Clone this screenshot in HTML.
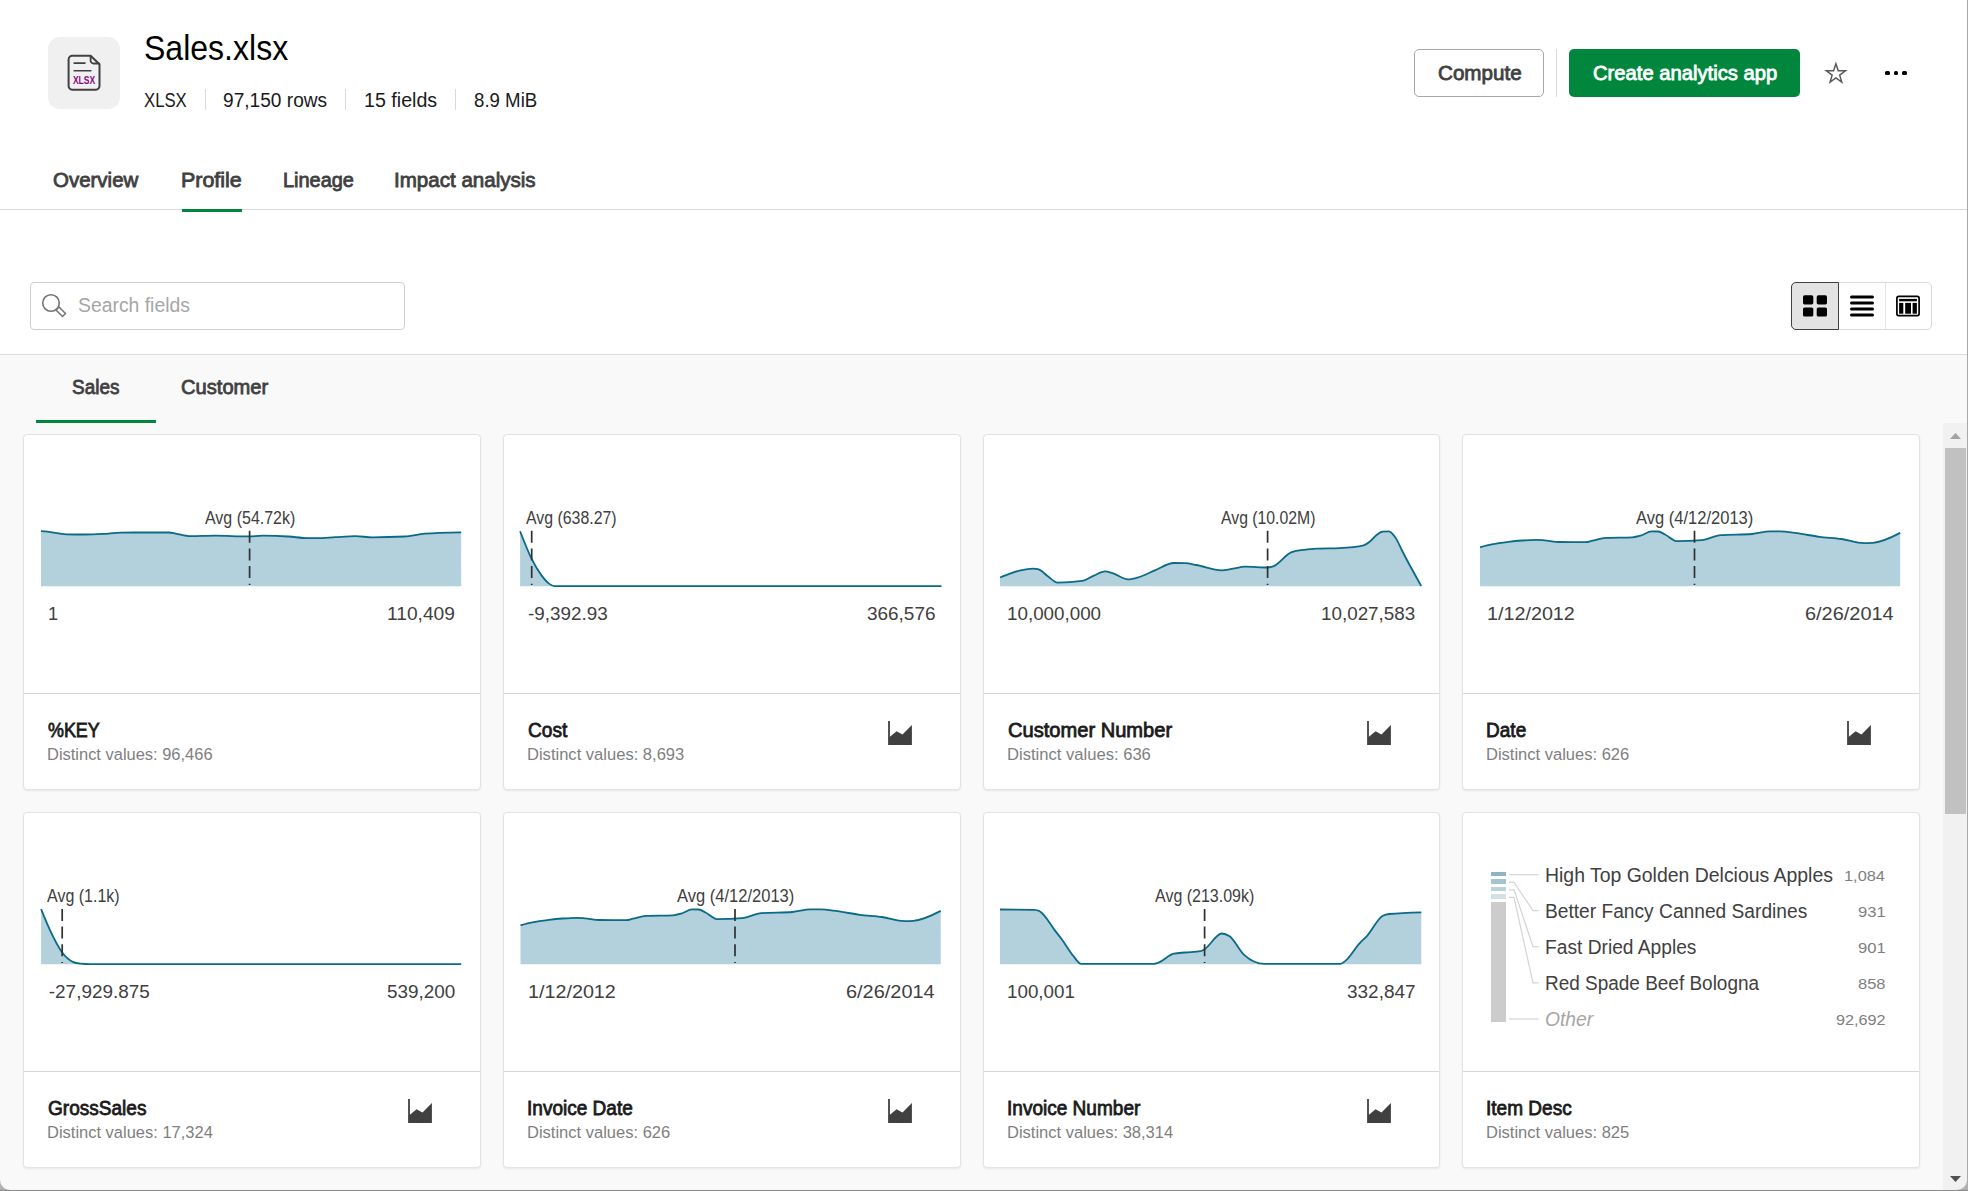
<!DOCTYPE html>
<html><head><meta charset="utf-8"><title>Sales.xlsx</title>
<style>
html,body{margin:0;padding:0;}
body{width:1968px;height:1191px;overflow:hidden;position:relative;background:#fff;font-family:"Liberation Sans",sans-serif;}
.abs{position:absolute;}
.t{position:absolute;white-space:nowrap;}
.card{position:absolute;background:#fff;border:1px solid #e3e3e3;border-radius:4px;box-shadow:0 1px 2px rgba(0,0,0,0.08);}
</style></head><body>
<div class="abs" style="left:48px;top:37px;width:72px;height:72px;border-radius:12px;background:#f0f0f0"></div>
<svg class="abs" style="left:48px;top:37px" width="72" height="72" viewBox="0 0 72 72">
<path d="M20.6 22.4 a3.6 3.6 0 0 1 3.6 -3.6 H42.6 L51.5 27.2 V49.1 a3.6 3.6 0 0 1 -3.6 3.6 H24.2 a3.6 3.6 0 0 1 -3.6 -3.6 Z" fill="none" stroke="#404040" stroke-width="2" stroke-linejoin="round"/>
<path d="M42.6 18.8 V23.6 a2.9 2.9 0 0 0 2.9 2.9 H51.5" fill="none" stroke="#404040" stroke-width="1.8" stroke-linejoin="round"/>
<path d="M26.1 26.1 H37.0 M26.1 33.7 H42.9" stroke="#404040" stroke-width="1.6" stroke-linecap="round"/>
<text x="24.9" y="46.9" font-family="Liberation Sans" font-weight="700" font-size="10.4" textLength="22.3" lengthAdjust="spacingAndGlyphs" fill="#8a0c80">XLSX</text>
</svg>
<div class="t" style="left:144.09px;top:31px;font-size:34.59px;line-height:34.59px;color:#000;transform:scaleX(0.9262);transform-origin:0 0;">Sales.xlsx</div>
<div class="t" style="left:143.87px;top:91px;font-size:19.62px;line-height:19.62px;color:#1a1a1a;transform:scaleX(0.8528);transform-origin:0 0;">XLSX</div>
<div class="t" style="left:223.15px;top:91px;font-size:19.62px;line-height:19.62px;color:#1a1a1a;transform:scaleX(0.9746);transform-origin:0 0;">97,150 rows</div>
<div class="t" style="left:364.30px;top:91px;font-size:19.62px;line-height:19.62px;color:#1a1a1a;transform:scaleX(1.0018);transform-origin:0 0;">15 fields</div>
<div class="t" style="left:473.97px;top:91px;font-size:19.62px;line-height:19.62px;color:#1a1a1a;transform:scaleX(0.9516);transform-origin:0 0;">8.9 MiB</div>
<div class="abs" style="left:205px;top:89px;width:1px;height:21px;background:#d9d9d9"></div>
<div class="abs" style="left:345px;top:89px;width:1px;height:21px;background:#d9d9d9"></div>
<div class="abs" style="left:455px;top:89px;width:1px;height:21px;background:#d9d9d9"></div>
<div class="abs" style="left:1414px;top:49px;width:128px;height:46px;border:1px solid #a8a8a8;border-radius:5px;background:#fff"></div>
<div class="t" style="left:1437.59px;top:63px;font-size:20.35px;line-height:20.35px;color:#404040;-webkit-text-stroke:0.8px #404040;transform:scaleX(1.0130);transform-origin:0 0;">Compute</div>
<div class="abs" style="left:1556px;top:49px;width:1px;height:48px;background:#d9d9d9"></div>
<div class="abs" style="left:1569px;top:49px;width:231px;height:48px;border-radius:5px;background:#00873d"></div>
<div class="t" style="left:1592.89px;top:63px;font-size:20.06px;line-height:20.06px;color:#fff;-webkit-text-stroke:0.8px #fff;transform:scaleX(1.0078);transform-origin:0 0;">Create analytics app</div>
<svg class="abs" style="left:1824px;top:61px" width="24" height="24" viewBox="0 0 24 24">
<path d="M11.90 2.85 L14.24 9.69 L21.44 9.78 L15.68 14.10 L17.75 21.03 L11.90 16.89 L6.05 21.03 L8.12 14.10 L2.36 9.78 L9.56 9.69 Z" fill="none" stroke="#595959" stroke-width="1.5" stroke-linejoin="miter"/>
</svg>
<div class="abs" style="left:1885.1px;top:70.5px;width:4.8px;height:4.8px;border-radius:1.6px;background:#000"></div>
<div class="abs" style="left:1893.6px;top:70.5px;width:4.8px;height:4.8px;border-radius:1.6px;background:#000"></div>
<div class="abs" style="left:1902.1px;top:70.5px;width:4.8px;height:4.8px;border-radius:1.6px;background:#000"></div>
<div class="t" style="left:53.49px;top:170px;font-size:20.35px;line-height:20.35px;color:#404040;-webkit-text-stroke:0.8px #404040;transform:scaleX(1.0060);transform-origin:0 0;">Overview</div>
<div class="t" style="left:180.99px;top:170px;font-size:20.35px;line-height:20.35px;color:#404040;-webkit-text-stroke:0.8px #404040;transform:scaleX(1.0540);transform-origin:0 0;">Profile</div>
<div class="t" style="left:282.81px;top:170px;font-size:20.35px;line-height:20.35px;color:#404040;-webkit-text-stroke:0.8px #404040;transform:scaleX(0.9800);transform-origin:0 0;">Lineage</div>
<div class="t" style="left:394.21px;top:170px;font-size:20.35px;line-height:20.35px;color:#404040;-webkit-text-stroke:0.8px #404040;transform:scaleX(1.0103);transform-origin:0 0;">Impact analysis</div>
<div class="abs" style="left:0;top:209px;width:1967px;height:1px;background:#d9d9d9"></div>
<div class="abs" style="left:182px;top:209px;width:60px;height:3px;background:#00873d"></div>
<div class="abs" style="left:30px;top:282px;width:373px;height:46px;border:1px solid #cfcfcf;border-radius:4px;background:#fff"></div>
<svg class="abs" style="left:40px;top:292px" width="28" height="28" viewBox="0 0 28 28">
<circle cx="11" cy="11" r="8.3" fill="none" stroke="#737373" stroke-width="1.6"/>
<path d="M16.0 18.0 L19.0 15.0 L25.5 21.5 L22.5 24.5 Z" fill="none" stroke="#737373" stroke-width="1.5" stroke-linejoin="round"/>
</svg>
<div class="t" style="left:78.15px;top:296px;font-size:19.91px;line-height:19.91px;color:#a6a6a6;transform:scaleX(0.9729);transform-origin:0 0;">Search fields</div>
<div class="abs" style="left:1791px;top:282px;width:139px;height:46px;border:1px solid #d9d9d9;border-radius:5px;background:#fff"></div>
<div class="abs" style="left:1885px;top:283px;width:1px;height:46px;background:#e6e6e6"></div>
<div class="abs" style="left:1791px;top:282px;width:46px;height:46px;border:1px solid #404040;border-radius:5px 0 0 5px;background:#e3e3e3"></div>
<svg class="abs" style="left:1790px;top:282px" width="140" height="48" viewBox="1790 282 140 48">
<rect x="1803" y="295.3" width="10.3" height="9.1" rx="1.6" fill="#000"/>
<rect x="1816.7" y="295.3" width="10.3" height="9.1" rx="1.6" fill="#000"/>
<rect x="1803" y="307.4" width="10.3" height="9.1" rx="1.6" fill="#000"/>
<rect x="1816.7" y="307.4" width="10.3" height="9.1" rx="1.6" fill="#000"/>
<path d="M1851.5 297 H1872.5 M1851.5 302.9 H1872.5 M1851.5 308.9 H1872.5 M1851.5 314.9 H1872.5" stroke="#000" stroke-width="3" stroke-linecap="round"/>
<rect x="1896.9" y="296.4" width="22.2" height="19.2" rx="1.8" fill="none" stroke="#000" stroke-width="1.7"/>
<rect x="1899.1" y="298.9" width="17.8" height="2.4" fill="#000"/>
<rect x="1899.1" y="302.9" width="4.2" height="10.8" fill="#000"/>
<rect x="1905.2" y="302.9" width="5.8" height="10.8" fill="#000"/>
<rect x="1912.6" y="302.9" width="4.3" height="10.8" fill="#000"/>
</svg>
<div class="abs" style="left:0;top:354px;width:1967px;height:1px;background:#d9d9d9"></div>
<div class="abs" style="left:0;top:355px;width:1967px;height:836px;background:#f9f9f9"></div>
<div class="t" style="left:72.47px;top:377px;font-size:20.35px;line-height:20.35px;color:#404040;-webkit-text-stroke:0.8px #404040;transform:scaleX(0.9320);transform-origin:0 0;">Sales</div>
<div class="t" style="left:181.41px;top:377px;font-size:20.35px;line-height:20.35px;color:#404040;-webkit-text-stroke:0.8px #404040;transform:scaleX(0.9897);transform-origin:0 0;">Customer</div>
<div class="abs" style="left:36px;top:420px;width:120px;height:3px;background:#00873d"></div>
<div class="card" style="left:23px;top:434px;width:456px;height:354px"></div>
<div class="abs" style="left:24px;top:692.5px;width:456px;height:1.5px;background:#d6d6d6"></div>
<div class="t" style="left:47.94px;top:720px;font-size:20.35px;line-height:20.35px;color:#1a1a1a;-webkit-text-stroke:0.8px #1a1a1a;transform:scaleX(0.8798);transform-origin:0 0;">%KEY</div>
<div class="t" style="left:47.46px;top:747px;font-size:16.86px;line-height:16.86px;color:#808080;transform:scaleX(0.9760);transform-origin:0 0;">Distinct values: 96,466</div>
<div class="card" style="left:503px;top:434px;width:456px;height:354px"></div>
<div class="abs" style="left:504px;top:692.5px;width:456px;height:1.5px;background:#d6d6d6"></div>
<div class="t" style="left:527.66px;top:720px;font-size:20.35px;line-height:20.35px;color:#1a1a1a;-webkit-text-stroke:0.8px #1a1a1a;transform:scaleX(0.9399);transform-origin:0 0;">Cost</div>
<div class="t" style="left:527.45px;top:747px;font-size:16.86px;line-height:16.86px;color:#808080;transform:scaleX(0.9814);transform-origin:0 0;">Distinct values: 8,693</div>
<svg class="abs" style="left:888px;top:721px" width="24" height="24" viewBox="0 0 24 24"><path d="M0.1 0 H1.9 V15.8 L8.6 10.2 L14.5 13.4 L23.9 4 V24 H0.1 Z" fill="#404040"/></svg>
<div class="card" style="left:983px;top:434px;width:455px;height:354px"></div>
<div class="abs" style="left:984px;top:692.5px;width:455px;height:1.5px;background:#d6d6d6"></div>
<div class="t" style="left:1007.61px;top:720px;font-size:20.35px;line-height:20.35px;color:#1a1a1a;-webkit-text-stroke:0.8px #1a1a1a;transform:scaleX(0.9877);transform-origin:0 0;">Customer Number</div>
<div class="t" style="left:1007.45px;top:747px;font-size:16.86px;line-height:16.86px;color:#808080;transform:scaleX(0.9839);transform-origin:0 0;">Distinct values: 636</div>
<svg class="abs" style="left:1367px;top:721px" width="24" height="24" viewBox="0 0 24 24"><path d="M0.1 0 H1.9 V15.8 L8.6 10.2 L14.5 13.4 L23.9 4 V24 H0.1 Z" fill="#404040"/></svg>
<div class="card" style="left:1462px;top:434px;width:456px;height:354px"></div>
<div class="abs" style="left:1463px;top:692.5px;width:456px;height:1.5px;background:#d6d6d6"></div>
<div class="t" style="left:1486.08px;top:720px;font-size:20.35px;line-height:20.35px;color:#1a1a1a;-webkit-text-stroke:0.8px #1a1a1a;transform:scaleX(0.9359);transform-origin:0 0;">Date</div>
<div class="t" style="left:1486.45px;top:747px;font-size:16.86px;line-height:16.86px;color:#808080;transform:scaleX(0.9797);transform-origin:0 0;">Distinct values: 626</div>
<svg class="abs" style="left:1847px;top:721px" width="24" height="24" viewBox="0 0 24 24"><path d="M0.1 0 H1.9 V15.8 L8.6 10.2 L14.5 13.4 L23.9 4 V24 H0.1 Z" fill="#404040"/></svg>
<div class="card" style="left:23px;top:812px;width:456px;height:354px"></div>
<div class="abs" style="left:24px;top:1070.5px;width:456px;height:1.5px;background:#d6d6d6"></div>
<div class="t" style="left:47.66px;top:1098px;font-size:20.35px;line-height:20.35px;color:#1a1a1a;-webkit-text-stroke:0.8px #1a1a1a;transform:scaleX(0.9361);transform-origin:0 0;">GrossSales</div>
<div class="t" style="left:47.46px;top:1125px;font-size:16.86px;line-height:16.86px;color:#808080;transform:scaleX(0.9775);transform-origin:0 0;">Distinct values: 17,324</div>
<svg class="abs" style="left:408px;top:1099px" width="24" height="24" viewBox="0 0 24 24"><path d="M0.1 0 H1.9 V15.8 L8.6 10.2 L14.5 13.4 L23.9 4 V24 H0.1 Z" fill="#404040"/></svg>
<div class="card" style="left:503px;top:812px;width:456px;height:354px"></div>
<div class="abs" style="left:504px;top:1070.5px;width:456px;height:1.5px;background:#d6d6d6"></div>
<div class="t" style="left:526.85px;top:1098px;font-size:20.35px;line-height:20.35px;color:#1a1a1a;-webkit-text-stroke:0.8px #1a1a1a;transform:scaleX(0.9359);transform-origin:0 0;">Invoice Date</div>
<div class="t" style="left:527.45px;top:1125px;font-size:16.86px;line-height:16.86px;color:#808080;transform:scaleX(0.9797);transform-origin:0 0;">Distinct values: 626</div>
<svg class="abs" style="left:888px;top:1099px" width="24" height="24" viewBox="0 0 24 24"><path d="M0.1 0 H1.9 V15.8 L8.6 10.2 L14.5 13.4 L23.9 4 V24 H0.1 Z" fill="#404040"/></svg>
<div class="card" style="left:983px;top:812px;width:455px;height:354px"></div>
<div class="abs" style="left:984px;top:1070.5px;width:455px;height:1.5px;background:#d6d6d6"></div>
<div class="t" style="left:1006.85px;top:1098px;font-size:20.35px;line-height:20.35px;color:#1a1a1a;-webkit-text-stroke:0.8px #1a1a1a;transform:scaleX(0.9359);transform-origin:0 0;">Invoice Number</div>
<div class="t" style="left:1007.45px;top:1125px;font-size:16.86px;line-height:16.86px;color:#808080;transform:scaleX(0.9797);transform-origin:0 0;">Distinct values: 38,314</div>
<svg class="abs" style="left:1367px;top:1099px" width="24" height="24" viewBox="0 0 24 24"><path d="M0.1 0 H1.9 V15.8 L8.6 10.2 L14.5 13.4 L23.9 4 V24 H0.1 Z" fill="#404040"/></svg>
<div class="card" style="left:1462px;top:812px;width:456px;height:354px"></div>
<div class="abs" style="left:1463px;top:1070.5px;width:456px;height:1.5px;background:#d6d6d6"></div>
<div class="t" style="left:1485.85px;top:1098px;font-size:20.35px;line-height:20.35px;color:#1a1a1a;-webkit-text-stroke:0.8px #1a1a1a;transform:scaleX(0.9359);transform-origin:0 0;">Item Desc</div>
<div class="t" style="left:1486.45px;top:1125px;font-size:16.86px;line-height:16.86px;color:#808080;transform:scaleX(0.9797);transform-origin:0 0;">Distinct values: 825</div>
<div class="t" style="left:204.75px;top:510px;font-size:17.44px;line-height:17.44px;color:#404040;transform:scaleX(0.9165);transform-origin:0 0;">Avg (54.72k)</div>
<div class="t" style="left:48.28px;top:605px;font-size:18.90px;line-height:18.90px;color:#404040;transform:scaleX(0.9576);transform-origin:0 0;">1</div>
<div class="t" style="left:387.40px;top:605px;font-size:18.90px;line-height:18.90px;color:#404040;transform:scaleX(1.0151);transform-origin:0 0;">110,409</div>
<div class="t" style="left:526.00px;top:510px;font-size:17.44px;line-height:17.44px;color:#404040;transform:scaleX(0.9104);transform-origin:0 0;">Avg (638.27)</div>
<div class="t" style="left:527.83px;top:605px;font-size:18.90px;line-height:18.90px;color:#404040;transform:scaleX(0.9974);transform-origin:0 0;">-9,392.93</div>
<div class="t" style="left:867.15px;top:605px;font-size:18.90px;line-height:18.90px;color:#404040;transform:scaleX(1.0026);transform-origin:0 0;">366,576</div>
<div class="t" style="left:1220.70px;top:510px;font-size:17.44px;line-height:17.44px;color:#404040;transform:scaleX(0.9052);transform-origin:0 0;">Avg (10.02M)</div>
<div class="t" style="left:1007.23px;top:605px;font-size:18.90px;line-height:18.90px;color:#404040;transform:scaleX(0.9949);transform-origin:0 0;">10,000,000</div>
<div class="t" style="left:1321.23px;top:605px;font-size:18.90px;line-height:18.90px;color:#404040;transform:scaleX(0.9962);transform-origin:0 0;">10,027,583</div>
<div class="t" style="left:1636.15px;top:510px;font-size:17.44px;line-height:17.44px;color:#404040;transform:scaleX(0.9478);transform-origin:0 0;">Avg (4/12/2013)</div>
<div class="t" style="left:1487.16px;top:605px;font-size:18.90px;line-height:18.90px;color:#404040;transform:scaleX(1.0450);transform-origin:0 0;">1/12/2012</div>
<div class="t" style="left:1805.35px;top:605px;font-size:18.90px;line-height:18.90px;color:#404040;transform:scaleX(1.0545);transform-origin:0 0;">6/26/2014</div>
<div class="t" style="left:47.10px;top:888px;font-size:17.44px;line-height:17.44px;color:#404040;transform:scaleX(0.9174);transform-origin:0 0;">Avg (1.1k)</div>
<div class="t" style="left:48.83px;top:983px;font-size:18.90px;line-height:18.90px;color:#404040;">-27,929.875</div>
<div class="t" style="left:386.95px;top:983px;font-size:18.90px;line-height:18.90px;color:#404040;">539,200</div>
<div class="t" style="left:676.65px;top:888px;font-size:17.44px;line-height:17.44px;color:#404040;transform:scaleX(0.9478);transform-origin:0 0;">Avg (4/12/2013)</div>
<div class="t" style="left:527.66px;top:983px;font-size:18.90px;line-height:18.90px;color:#404040;transform:scaleX(1.0450);transform-origin:0 0;">1/12/2012</div>
<div class="t" style="left:845.85px;top:983px;font-size:18.90px;line-height:18.90px;color:#404040;transform:scaleX(1.0545);transform-origin:0 0;">6/26/2014</div>
<div class="t" style="left:1155.30px;top:888px;font-size:17.44px;line-height:17.44px;color:#404040;transform:scaleX(0.9172);transform-origin:0 0;">Avg (213.09k)</div>
<div class="t" style="left:1007.23px;top:983px;font-size:18.90px;line-height:18.90px;color:#404040;transform:scaleX(0.9939);transform-origin:0 0;">100,001</div>
<div class="t" style="left:1346.95px;top:983px;font-size:18.90px;line-height:18.90px;color:#404040;transform:scaleX(1.0045);transform-origin:0 0;">332,847</div>
<div class="t" style="left:1544.95px;top:865px;font-size:20.35px;line-height:20.35px;color:#404040;transform:scaleX(0.9548);transform-origin:0 0;">High Top Golden Delcious Apples</div>
<div class="t" style="left:1844.27px;top:869px;font-size:14.97px;line-height:14.97px;color:#808080;transform:scaleX(1.0917);transform-origin:0 0;">1,084</div>
<div class="t" style="left:1544.97px;top:901px;font-size:20.35px;line-height:20.35px;color:#404040;transform:scaleX(0.9426);transform-origin:0 0;">Better Fancy Canned Sardines</div>
<div class="t" style="left:1857.87px;top:905px;font-size:14.97px;line-height:14.97px;color:#808080;transform:scaleX(1.1106);transform-origin:0 0;">931</div>
<div class="t" style="left:1544.97px;top:937px;font-size:20.35px;line-height:20.35px;color:#404040;transform:scaleX(0.9432);transform-origin:0 0;">Fast Dried Apples</div>
<div class="t" style="left:1857.87px;top:941px;font-size:14.97px;line-height:14.97px;color:#808080;transform:scaleX(1.1106);transform-origin:0 0;">901</div>
<div class="t" style="left:1544.99px;top:973px;font-size:20.35px;line-height:20.35px;color:#404040;transform:scaleX(0.9322);transform-origin:0 0;">Red Spade Beef Bologna</div>
<div class="t" style="left:1858.01px;top:977px;font-size:14.97px;line-height:14.97px;color:#808080;transform:scaleX(1.0989);transform-origin:0 0;">858</div>
<div class="t" style="left:1545.44px;top:1009px;font-size:20.35px;line-height:20.35px;color:#a6a6a6;font-style:italic;transform:scaleX(0.9465);transform-origin:0 0;">Other</div>
<div class="t" style="left:1835.89px;top:1013px;font-size:14.97px;line-height:14.97px;color:#808080;transform:scaleX(1.0839);transform-origin:0 0;">92,692</div>
<svg class="abs" style="left:0;top:0" width="1968" height="1191" viewBox="0 0 1968 1191">
<path d="M41.00 531.20 C43.07 531.35 45.13 531.50 47.20 531.70 C53.53 532.30 59.87 534.16 66.20 534.30 C72.17 534.43 78.13 534.50 84.10 534.50 C90.43 534.50 96.77 534.23 103.10 533.90 C109.07 533.59 115.03 532.64 121.00 532.60 C129.93 532.53 138.87 532.50 147.80 532.50 C154.87 532.50 161.93 532.50 169.00 532.50 C171.23 532.50 173.47 533.22 175.70 533.60 C180.57 534.42 185.43 536.20 190.30 536.20 C198.50 536.20 206.70 535.70 214.90 535.70 C226.07 535.70 237.23 536.40 248.40 536.40 C253.20 536.40 258.00 535.70 262.80 535.70 C271.37 535.70 279.93 535.97 288.50 536.50 C294.83 536.89 301.17 538.10 307.50 538.10 C310.83 538.10 314.17 538.10 317.50 538.10 C323.47 538.10 329.43 537.40 335.40 537.10 C342.13 536.76 348.87 536.20 355.60 536.20 C361.17 536.20 366.73 537.30 372.30 537.30 C383.10 537.30 393.90 537.03 404.70 536.50 C411.43 536.17 418.17 534.08 424.90 533.60 C437.00 532.73 449.10 532.52 461.20 532.30 L461.20 586.30 L41.00 586.30 Z" fill="#b3d1dc"/>
<path d="M41.00 531.20 C43.07 531.35 45.13 531.50 47.20 531.70 C53.53 532.30 59.87 534.16 66.20 534.30 C72.17 534.43 78.13 534.50 84.10 534.50 C90.43 534.50 96.77 534.23 103.10 533.90 C109.07 533.59 115.03 532.64 121.00 532.60 C129.93 532.53 138.87 532.50 147.80 532.50 C154.87 532.50 161.93 532.50 169.00 532.50 C171.23 532.50 173.47 533.22 175.70 533.60 C180.57 534.42 185.43 536.20 190.30 536.20 C198.50 536.20 206.70 535.70 214.90 535.70 C226.07 535.70 237.23 536.40 248.40 536.40 C253.20 536.40 258.00 535.70 262.80 535.70 C271.37 535.70 279.93 535.97 288.50 536.50 C294.83 536.89 301.17 538.10 307.50 538.10 C310.83 538.10 314.17 538.10 317.50 538.10 C323.47 538.10 329.43 537.40 335.40 537.10 C342.13 536.76 348.87 536.20 355.60 536.20 C361.17 536.20 366.73 537.30 372.30 537.30 C383.10 537.30 393.90 537.03 404.70 536.50 C411.43 536.17 418.17 534.08 424.90 533.60 C437.00 532.73 449.10 532.52 461.20 532.30" fill="none" stroke="#0b6a87" stroke-width="1.8" stroke-linejoin="round"/>
<line x1="249.6" y1="530.7" x2="249.6" y2="585.0" stroke="#303030" stroke-width="1.7" stroke-dasharray="12 5.7"/>
<path d="M520.10 531.30 C523.87 541.04 527.63 550.79 531.40 558.40 C534.77 565.20 538.13 570.87 541.50 575.40 C544.00 578.76 546.50 581.76 549.00 583.60 C550.70 584.85 552.40 586.10 554.10 586.10 C569.40 586.10 584.70 586.10 600.00 586.10 C713.83 586.10 827.67 586.10 941.50 586.10 L941.50 586.30 L520.10 586.30 Z" fill="#b3d1dc"/>
<path d="M520.10 531.30 C523.87 541.04 527.63 550.79 531.40 558.40 C534.77 565.20 538.13 570.87 541.50 575.40 C544.00 578.76 546.50 581.76 549.00 583.60 C550.70 584.85 552.40 586.10 554.10 586.10 C569.40 586.10 584.70 586.10 600.00 586.10 C713.83 586.10 827.67 586.10 941.50 586.10" fill="none" stroke="#0b6a87" stroke-width="1.8" stroke-linejoin="round"/>
<line x1="531.7" y1="530.7" x2="531.7" y2="585.0" stroke="#303030" stroke-width="1.7" stroke-dasharray="12 5.7"/>
<path d="M1000.00 577.50 C1003.57 576.01 1007.13 574.53 1010.70 573.30 C1014.03 572.15 1017.37 571.06 1020.70 570.30 C1024.80 569.37 1028.90 568.60 1033.00 568.60 C1034.67 568.60 1036.33 568.80 1038.00 569.20 C1041.17 569.96 1044.33 573.73 1047.50 575.90 C1050.87 578.21 1054.23 582.60 1057.60 582.60 C1065.80 582.60 1074.00 582.03 1082.20 580.90 C1085.93 580.38 1089.67 577.45 1093.40 575.90 C1097.30 574.28 1101.20 571.40 1105.10 571.40 C1107.53 571.40 1109.97 572.40 1112.40 573.10 C1117.60 574.59 1122.80 579.40 1128.00 579.40 C1131.73 579.40 1135.47 578.13 1139.20 577.00 C1144.43 575.42 1149.67 572.43 1154.90 570.30 C1161.23 567.72 1167.57 563.00 1173.90 563.00 C1177.63 563.00 1181.37 563.07 1185.10 563.20 C1188.80 563.33 1192.50 564.35 1196.20 565.00 C1204.73 566.50 1213.27 570.30 1221.80 570.30 C1225.53 570.30 1229.27 569.19 1233.00 568.60 C1237.07 567.96 1241.13 566.60 1245.20 566.60 C1252.67 566.60 1260.13 567.50 1267.60 567.50 C1269.47 567.50 1271.33 567.03 1273.20 566.40 C1279.17 564.40 1285.13 554.70 1291.10 552.40 C1295.93 550.53 1300.77 550.23 1305.60 549.60 C1309.33 549.12 1313.07 548.90 1316.80 548.70 C1324.27 548.30 1331.73 548.50 1339.20 548.10 C1347.37 547.66 1355.53 547.17 1363.70 545.30 C1365.80 544.82 1367.90 543.07 1370.00 541.40 C1372.10 539.73 1374.20 536.93 1376.30 535.30 C1378.40 533.67 1380.50 531.73 1382.60 531.60 C1384.77 531.47 1386.93 531.40 1389.10 531.40 C1390.30 531.40 1391.50 532.84 1392.70 534.10 C1393.93 535.39 1395.17 537.10 1396.40 539.10 C1398.27 542.13 1400.13 546.78 1402.00 550.50 C1408.43 563.31 1414.87 574.66 1421.30 586.00 L1421.30 586.30 L1000.00 586.30 Z" fill="#b3d1dc"/>
<path d="M1000.00 577.50 C1003.57 576.01 1007.13 574.53 1010.70 573.30 C1014.03 572.15 1017.37 571.06 1020.70 570.30 C1024.80 569.37 1028.90 568.60 1033.00 568.60 C1034.67 568.60 1036.33 568.80 1038.00 569.20 C1041.17 569.96 1044.33 573.73 1047.50 575.90 C1050.87 578.21 1054.23 582.60 1057.60 582.60 C1065.80 582.60 1074.00 582.03 1082.20 580.90 C1085.93 580.38 1089.67 577.45 1093.40 575.90 C1097.30 574.28 1101.20 571.40 1105.10 571.40 C1107.53 571.40 1109.97 572.40 1112.40 573.10 C1117.60 574.59 1122.80 579.40 1128.00 579.40 C1131.73 579.40 1135.47 578.13 1139.20 577.00 C1144.43 575.42 1149.67 572.43 1154.90 570.30 C1161.23 567.72 1167.57 563.00 1173.90 563.00 C1177.63 563.00 1181.37 563.07 1185.10 563.20 C1188.80 563.33 1192.50 564.35 1196.20 565.00 C1204.73 566.50 1213.27 570.30 1221.80 570.30 C1225.53 570.30 1229.27 569.19 1233.00 568.60 C1237.07 567.96 1241.13 566.60 1245.20 566.60 C1252.67 566.60 1260.13 567.50 1267.60 567.50 C1269.47 567.50 1271.33 567.03 1273.20 566.40 C1279.17 564.40 1285.13 554.70 1291.10 552.40 C1295.93 550.53 1300.77 550.23 1305.60 549.60 C1309.33 549.12 1313.07 548.90 1316.80 548.70 C1324.27 548.30 1331.73 548.50 1339.20 548.10 C1347.37 547.66 1355.53 547.17 1363.70 545.30 C1365.80 544.82 1367.90 543.07 1370.00 541.40 C1372.10 539.73 1374.20 536.93 1376.30 535.30 C1378.40 533.67 1380.50 531.73 1382.60 531.60 C1384.77 531.47 1386.93 531.40 1389.10 531.40 C1390.30 531.40 1391.50 532.84 1392.70 534.10 C1393.93 535.39 1395.17 537.10 1396.40 539.10 C1398.27 542.13 1400.13 546.78 1402.00 550.50 C1408.43 563.31 1414.87 574.66 1421.30 586.00" fill="none" stroke="#0b6a87" stroke-width="1.8" stroke-linejoin="round"/>
<line x1="1267.6" y1="530.7" x2="1267.6" y2="585.0" stroke="#303030" stroke-width="1.7" stroke-dasharray="12 5.7"/>
<path d="M1480.00 547.20 C1483.93 546.16 1487.87 545.11 1491.80 544.30 C1497.37 543.15 1502.93 542.47 1508.50 541.80 C1513.00 541.26 1517.50 540.83 1522.00 540.50 C1526.83 540.15 1531.67 539.80 1536.50 539.80 C1539.10 539.80 1541.70 540.09 1544.30 540.30 C1549.13 540.70 1553.97 541.96 1558.80 542.00 C1567.77 542.07 1576.73 542.10 1585.70 542.10 C1587.93 542.10 1590.17 541.17 1592.40 540.70 C1596.87 539.77 1601.33 538.10 1605.80 537.90 C1614.73 537.50 1623.67 537.70 1632.60 537.30 C1635.23 537.18 1637.87 536.44 1640.50 535.70 C1644.20 534.67 1647.90 531.40 1651.60 531.40 C1653.83 531.40 1656.07 531.43 1658.30 531.50 C1660.53 531.57 1662.77 533.42 1665.00 534.50 C1669.10 536.48 1673.20 541.20 1677.30 541.20 C1685.47 541.20 1693.63 540.83 1701.80 540.10 C1708.13 539.53 1714.47 535.55 1720.80 535.10 C1731.23 534.37 1741.67 534.73 1752.10 534.00 C1758.07 533.58 1764.03 531.40 1770.00 531.40 C1773.33 531.40 1776.67 531.40 1780.00 531.40 C1785.60 531.40 1791.20 532.47 1796.80 533.20 C1804.27 534.17 1811.73 535.83 1819.20 536.80 C1826.63 537.76 1834.07 537.95 1841.50 539.00 C1848.97 540.05 1856.43 543.10 1863.90 543.10 C1866.87 543.10 1869.83 543.03 1872.80 542.90 C1881.93 542.49 1891.07 537.69 1900.20 532.90 L1900.20 586.30 L1480.00 586.30 Z" fill="#b3d1dc"/>
<path d="M1480.00 547.20 C1483.93 546.16 1487.87 545.11 1491.80 544.30 C1497.37 543.15 1502.93 542.47 1508.50 541.80 C1513.00 541.26 1517.50 540.83 1522.00 540.50 C1526.83 540.15 1531.67 539.80 1536.50 539.80 C1539.10 539.80 1541.70 540.09 1544.30 540.30 C1549.13 540.70 1553.97 541.96 1558.80 542.00 C1567.77 542.07 1576.73 542.10 1585.70 542.10 C1587.93 542.10 1590.17 541.17 1592.40 540.70 C1596.87 539.77 1601.33 538.10 1605.80 537.90 C1614.73 537.50 1623.67 537.70 1632.60 537.30 C1635.23 537.18 1637.87 536.44 1640.50 535.70 C1644.20 534.67 1647.90 531.40 1651.60 531.40 C1653.83 531.40 1656.07 531.43 1658.30 531.50 C1660.53 531.57 1662.77 533.42 1665.00 534.50 C1669.10 536.48 1673.20 541.20 1677.30 541.20 C1685.47 541.20 1693.63 540.83 1701.80 540.10 C1708.13 539.53 1714.47 535.55 1720.80 535.10 C1731.23 534.37 1741.67 534.73 1752.10 534.00 C1758.07 533.58 1764.03 531.40 1770.00 531.40 C1773.33 531.40 1776.67 531.40 1780.00 531.40 C1785.60 531.40 1791.20 532.47 1796.80 533.20 C1804.27 534.17 1811.73 535.83 1819.20 536.80 C1826.63 537.76 1834.07 537.95 1841.50 539.00 C1848.97 540.05 1856.43 543.10 1863.90 543.10 C1866.87 543.10 1869.83 543.03 1872.80 542.90 C1881.93 542.49 1891.07 537.69 1900.20 532.90" fill="none" stroke="#0b6a87" stroke-width="1.8" stroke-linejoin="round"/>
<line x1="1694.5" y1="530.7" x2="1694.5" y2="585.0" stroke="#303030" stroke-width="1.7" stroke-dasharray="12 5.7"/>
<path d="M41.10 909.20 C44.10 916.61 47.10 924.01 50.10 930.40 C54.13 938.99 58.17 947.16 62.20 952.50 C65.90 957.40 69.60 960.51 73.30 962.10 C75.63 963.10 77.97 963.36 80.30 963.60 C83.53 963.93 86.77 964.10 90.00 964.10 C106.67 964.10 123.33 964.10 140.00 964.10 C247.07 964.10 354.13 964.10 461.20 964.10 L461.20 964.30 L41.10 964.30 Z" fill="#b3d1dc"/>
<path d="M41.10 909.20 C44.10 916.61 47.10 924.01 50.10 930.40 C54.13 938.99 58.17 947.16 62.20 952.50 C65.90 957.40 69.60 960.51 73.30 962.10 C75.63 963.10 77.97 963.36 80.30 963.60 C83.53 963.93 86.77 964.10 90.00 964.10 C106.67 964.10 123.33 964.10 140.00 964.10 C247.07 964.10 354.13 964.10 461.20 964.10" fill="none" stroke="#0b6a87" stroke-width="1.8" stroke-linejoin="round"/>
<line x1="62.2" y1="908.9000000000001" x2="62.2" y2="963.0" stroke="#303030" stroke-width="1.7" stroke-dasharray="12 5.7"/>
<path d="M520.50 925.20 C524.43 924.16 528.37 923.11 532.30 922.30 C537.87 921.15 543.43 920.47 549.00 919.80 C553.50 919.26 558.00 918.83 562.50 918.50 C567.33 918.15 572.17 917.80 577.00 917.80 C579.60 917.80 582.20 918.09 584.80 918.30 C589.63 918.70 594.47 919.96 599.30 920.00 C608.27 920.07 617.23 920.10 626.20 920.10 C628.43 920.10 630.67 919.17 632.90 918.70 C637.37 917.77 641.83 916.10 646.30 915.90 C655.23 915.50 664.17 915.70 673.10 915.30 C675.73 915.18 678.37 914.44 681.00 913.70 C684.70 912.67 688.40 909.40 692.10 909.40 C694.33 909.40 696.57 909.43 698.80 909.50 C701.03 909.57 703.27 911.42 705.50 912.50 C709.60 914.48 713.70 919.20 717.80 919.20 C725.97 919.20 734.13 918.83 742.30 918.10 C748.63 917.53 754.97 913.55 761.30 913.10 C771.73 912.37 782.17 912.73 792.60 912.00 C798.57 911.58 804.53 909.40 810.50 909.40 C813.83 909.40 817.17 909.40 820.50 909.40 C826.10 909.40 831.70 910.47 837.30 911.20 C844.77 912.17 852.23 913.83 859.70 914.80 C867.13 915.76 874.57 915.95 882.00 917.00 C889.47 918.05 896.93 921.10 904.40 921.10 C907.37 921.10 910.33 921.03 913.30 920.90 C922.43 920.49 931.57 915.69 940.70 910.90 L940.70 964.30 L520.50 964.30 Z" fill="#b3d1dc"/>
<path d="M520.50 925.20 C524.43 924.16 528.37 923.11 532.30 922.30 C537.87 921.15 543.43 920.47 549.00 919.80 C553.50 919.26 558.00 918.83 562.50 918.50 C567.33 918.15 572.17 917.80 577.00 917.80 C579.60 917.80 582.20 918.09 584.80 918.30 C589.63 918.70 594.47 919.96 599.30 920.00 C608.27 920.07 617.23 920.10 626.20 920.10 C628.43 920.10 630.67 919.17 632.90 918.70 C637.37 917.77 641.83 916.10 646.30 915.90 C655.23 915.50 664.17 915.70 673.10 915.30 C675.73 915.18 678.37 914.44 681.00 913.70 C684.70 912.67 688.40 909.40 692.10 909.40 C694.33 909.40 696.57 909.43 698.80 909.50 C701.03 909.57 703.27 911.42 705.50 912.50 C709.60 914.48 713.70 919.20 717.80 919.20 C725.97 919.20 734.13 918.83 742.30 918.10 C748.63 917.53 754.97 913.55 761.30 913.10 C771.73 912.37 782.17 912.73 792.60 912.00 C798.57 911.58 804.53 909.40 810.50 909.40 C813.83 909.40 817.17 909.40 820.50 909.40 C826.10 909.40 831.70 910.47 837.30 911.20 C844.77 912.17 852.23 913.83 859.70 914.80 C867.13 915.76 874.57 915.95 882.00 917.00 C889.47 918.05 896.93 921.10 904.40 921.10 C907.37 921.10 910.33 921.03 913.30 920.90 C922.43 920.49 931.57 915.69 940.70 910.90" fill="none" stroke="#0b6a87" stroke-width="1.8" stroke-linejoin="round"/>
<line x1="735.0" y1="908.9000000000001" x2="735.0" y2="963.0" stroke="#303030" stroke-width="1.7" stroke-dasharray="12 5.7"/>
<path d="M1000.00 909.50 C1011.37 909.55 1022.73 909.60 1034.10 909.80 C1035.97 909.83 1037.83 910.27 1039.70 911.20 C1041.57 912.13 1043.43 914.63 1045.30 916.80 C1048.30 920.29 1051.30 925.54 1054.30 929.60 C1056.90 933.12 1059.50 936.17 1062.10 939.70 C1065.83 944.77 1069.57 951.43 1073.30 955.90 C1075.90 959.02 1078.50 963.90 1081.10 963.90 C1090.73 963.90 1100.37 963.90 1110.00 963.90 C1124.57 963.90 1139.13 963.90 1153.70 963.90 C1154.83 963.90 1155.97 963.50 1157.10 963.20 C1162.70 961.71 1168.30 954.91 1173.90 953.70 C1177.60 952.90 1181.30 952.86 1185.00 952.50 C1190.23 951.99 1195.47 952.07 1200.70 951.20 C1202.00 950.98 1203.30 949.96 1204.60 949.20 C1210.33 945.84 1216.07 933.50 1221.80 933.50 C1224.40 933.50 1227.00 934.53 1229.60 936.30 C1234.43 939.59 1239.27 950.45 1244.10 954.80 C1250.83 960.87 1257.57 963.90 1264.30 963.90 C1276.20 963.90 1288.10 963.90 1300.00 963.90 C1313.43 963.90 1326.87 963.90 1340.30 963.90 C1342.17 963.90 1344.03 961.91 1345.90 960.40 C1350.37 956.78 1354.83 948.48 1359.30 943.60 C1361.90 940.76 1364.50 938.64 1367.10 935.80 C1372.33 930.08 1377.57 918.36 1382.80 915.70 C1385.03 914.57 1387.27 914.24 1389.50 914.00 C1400.10 912.87 1410.70 912.58 1421.30 912.30 L1421.30 964.30 L1000.00 964.30 Z" fill="#b3d1dc"/>
<path d="M1000.00 909.50 C1011.37 909.55 1022.73 909.60 1034.10 909.80 C1035.97 909.83 1037.83 910.27 1039.70 911.20 C1041.57 912.13 1043.43 914.63 1045.30 916.80 C1048.30 920.29 1051.30 925.54 1054.30 929.60 C1056.90 933.12 1059.50 936.17 1062.10 939.70 C1065.83 944.77 1069.57 951.43 1073.30 955.90 C1075.90 959.02 1078.50 963.90 1081.10 963.90 C1090.73 963.90 1100.37 963.90 1110.00 963.90 C1124.57 963.90 1139.13 963.90 1153.70 963.90 C1154.83 963.90 1155.97 963.50 1157.10 963.20 C1162.70 961.71 1168.30 954.91 1173.90 953.70 C1177.60 952.90 1181.30 952.86 1185.00 952.50 C1190.23 951.99 1195.47 952.07 1200.70 951.20 C1202.00 950.98 1203.30 949.96 1204.60 949.20 C1210.33 945.84 1216.07 933.50 1221.80 933.50 C1224.40 933.50 1227.00 934.53 1229.60 936.30 C1234.43 939.59 1239.27 950.45 1244.10 954.80 C1250.83 960.87 1257.57 963.90 1264.30 963.90 C1276.20 963.90 1288.10 963.90 1300.00 963.90 C1313.43 963.90 1326.87 963.90 1340.30 963.90 C1342.17 963.90 1344.03 961.91 1345.90 960.40 C1350.37 956.78 1354.83 948.48 1359.30 943.60 C1361.90 940.76 1364.50 938.64 1367.10 935.80 C1372.33 930.08 1377.57 918.36 1382.80 915.70 C1385.03 914.57 1387.27 914.24 1389.50 914.00 C1400.10 912.87 1410.70 912.58 1421.30 912.30" fill="none" stroke="#0b6a87" stroke-width="1.8" stroke-linejoin="round"/>
<line x1="1204.6" y1="908.9000000000001" x2="1204.6" y2="963.0" stroke="#303030" stroke-width="1.7" stroke-dasharray="12 5.7"/>
<rect x="1491" y="872" width="15" height="4" fill="#8fb4c3"/>
<rect x="1491" y="879" width="15" height="5" fill="#a4c3cf"/>
<rect x="1491" y="887" width="15" height="4" fill="#bad2db"/>
<rect x="1491" y="894" width="15" height="5" fill="#d2e1e7"/>
<rect x="1491" y="902" width="15" height="120" fill="#cccccc"/>
<path d="M1509 874.7 H1538.6" stroke="#d4d4d4" stroke-width="1.2" fill="none"/>
<path d="M1509 882.3 H1514 L1533 910.7 H1538.6" stroke="#d4d4d4" stroke-width="1.2" fill="none"/>
<path d="M1509 889.9 H1514 L1533 946.6 H1538.6" stroke="#d4d4d4" stroke-width="1.2" fill="none"/>
<path d="M1509 897.4 H1514 L1533 982.9 H1538.6" stroke="#d4d4d4" stroke-width="1.2" fill="none"/>
<path d="M1509 1019 H1538.6" stroke="#d4d4d4" stroke-width="1.2" fill="none"/>
</svg>
<div class="abs" style="left:1943px;top:423px;width:24px;height:768px;background:#f1f1f1"></div>
<div class="abs" style="left:1945px;top:448px;width:21px;height:366px;background:#c1c1c1"></div>
<svg class="abs" style="left:1943px;top:423px" width="24" height="24"><path d="M7 16 L12.5 10 L18 16 Z" fill="#a3a3a3"/></svg>
<svg class="abs" style="left:1943px;top:1167px" width="24" height="24"><path d="M7 9 L18 9 L12.5 15 Z" fill="#505050"/></svg>
<div class="abs" style="left:1967px;top:0;width:1px;height:1191px;background:#a8a8a8"></div>
<div class="abs" style="left:0;top:1190px;width:1968px;height:1px;background:#8c8c8c"></div>
<svg class="abs" style="left:0;top:1180px" width="11" height="11"><path d="M0 0 A10 10 0 0 0 10 10 H0 Z" fill="#b0b0b0"/></svg>
<svg class="abs" style="left:1957px;top:1180px" width="11" height="11"><path d="M10 0 A10 10 0 0 1 0 10 H11 V0 Z" fill="#b0b0b0"/></svg>
</body></html>
